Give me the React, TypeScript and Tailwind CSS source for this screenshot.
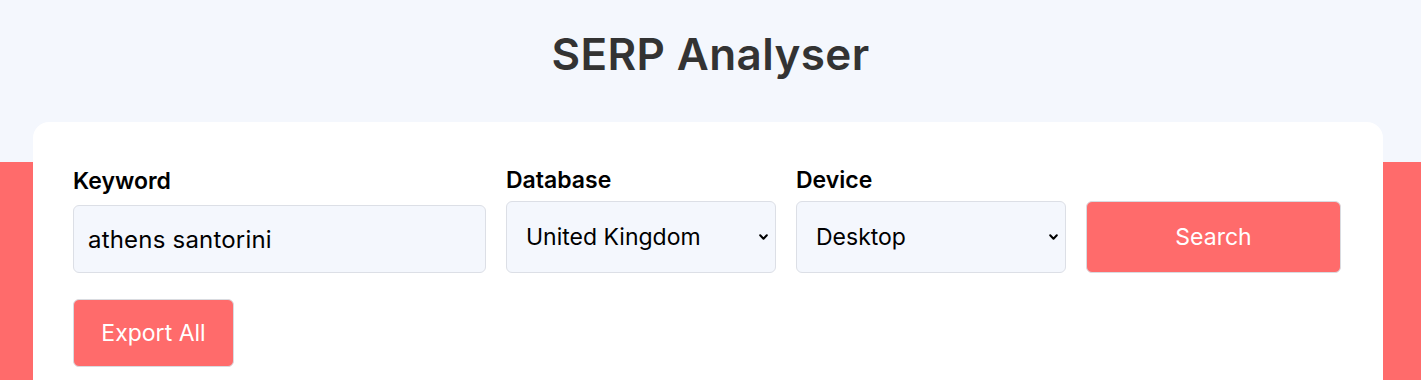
import { useState } from 'react';

function Chevron() {
  return (
    <svg className="pointer-events-none absolute right-[7px] top-1/2 -translate-y-1/2 h-[11px] w-[11px] text-black" viewBox="0 0 10 10" fill="none" stroke="currentColor">
      <path d="M2 3.5 5 6.5 8 3.5" strokeWidth={1.9} strokeLinecap="round" strokeLinejoin="round" />
    </svg>
  );
}

export default function App() {
  const [keyword, setKeyword] = useState('athens santorini');
  const [database, setDatabase] = useState('uk');
  const [device, setDevice] = useState('desktop');

  return (
    <div className="min-h-[380px] bg-[linear-gradient(to_bottom,#f4f7fd_162px,#ff6b6b_162px)] font-['Inter','Liberation_Sans',sans-serif]">
      <h1 className="pt-[28px] pb-[42px] text-center text-[44px] leading-[52px] font-semibold tracking-[0.4px] text-[#333333]">
        SERP Analyser
      </h1>
      <div className="mx-[33px] w-[1350px] rounded-[16px] bg-white px-[40px] pt-[44px] pb-[40px]">
        <div className="flex items-end gap-5">
          <div className="flex w-[413px] flex-col">
            <label htmlFor="keyword" className="mb-[10px] text-[23px] leading-[28px] font-semibold text-black">
              Keyword
            </label>
            <input
              id="keyword"
              value={keyword}
              onChange={(e) => setKeyword(e.target.value)}
              className="h-[68px] rounded-[6px] border border-[#dcdfe6] bg-[#f4f7fd] px-[14px] text-[24px] tracking-[0.2px] text-black outline-none"
            />
          </div>
          <div className="flex w-[270px] flex-col">
            <label htmlFor="database" className="mb-[7px] text-[23px] leading-[28px] font-semibold text-black">
              Database
            </label>
            <div className="relative">
              <select
                id="database"
                value={database}
                onChange={(e) => setDatabase(e.target.value)}
                className="h-[72px] w-full appearance-none rounded-[6px] border border-[#dcdfe6] bg-[#f4f7fd] px-[19px] text-[23px] text-black outline-none"
              >
                <option value="uk">United Kingdom</option>
                <option value="us">United States</option>
              </select>
              <Chevron />
            </div>
          </div>
          <div className="flex w-[270px] flex-col">
            <label htmlFor="device" className="mb-[7px] text-[23px] leading-[28px] font-semibold text-black">
              Device
            </label>
            <div className="relative">
              <select
                id="device"
                value={device}
                onChange={(e) => setDevice(e.target.value)}
                className="h-[72px] w-full appearance-none rounded-[6px] border border-[#dcdfe6] bg-[#f4f7fd] px-[19px] text-[23px] text-black outline-none"
              >
                <option value="desktop">Desktop</option>
                <option value="mobile">Mobile</option>
              </select>
              <Chevron />
            </div>
          </div>
          <button className="h-[72px] w-[255px] rounded-[6px] border border-[#d9dbe0] bg-[#ff6b6b] text-[23px] text-white">
            Search
          </button>
        </div>
        <button className="mt-[26px] h-[68px] w-[161px] rounded-[6px] border border-[#d9dbe0] bg-[#ff6b6b] text-[23px] text-white">
          Export All
        </button>
      </div>
    </div>
  );
}
